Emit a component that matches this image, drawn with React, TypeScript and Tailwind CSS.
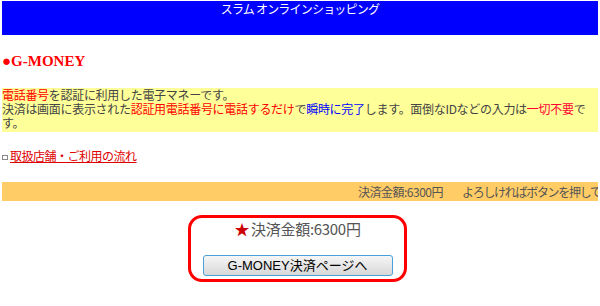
import React from "react";

export default function App() {
  const jp = { fontFamily: '"Noto Sans CJK JP", "Noto Sans", sans-serif' };
  return (
    <div className="w-[600px] h-[306px] bg-white overflow-hidden px-[2px] pt-[1px]" style={jp}>
      <div className="h-[34px] bg-[#0000ff] text-white text-[12px] leading-[16px] text-center tracking-[-0.8px]">
        スラム オンラインショッピング
      </div>
      <h1
        className="mt-[17px] h-[18px] text-[15px] leading-[18px] font-bold text-[#ff0000]"
        style={{ fontFamily: '"Liberation Serif", serif' }}
      >
        ●G-MONEY
      </h1>
      <div className="mt-[18px] bg-[#ffff99] text-[12px] leading-[14px] text-[#444] pb-[2px] tracking-[-0.3px] whitespace-nowrap overflow-hidden">
        <div>
          <span className="text-[#ff0000]">電話番号</span>を認証に利用した電子マネーです。
        </div>
        <div>
          決済は画面に表示された<span className="text-[#ff0000]">認証用電話番号に電話するだけ</span>で<span className="text-[#0000ff]">瞬時に完了</span>します。面倒なIDなどの入力は<span className="text-[#ff0033]">一切不要</span>で
        </div>
        <div>す。</div>
      </div>
      <div className="mt-[16px] flex items-center h-[16px] text-[12px] leading-[16px] tracking-[-0.5px]">
        <span className="inline-block w-[6px] h-[5px] border border-[#888] mr-[2px] mt-[3px]" />
        <a href="#" className="text-[#dd0000] underline">
          取扱店舗・ご利用の流れ
        </a>
      </div>
      <div className="mt-[18px] h-[19px] bg-[#ffcc66] text-[12px] leading-[19px] text-[#555] whitespace-nowrap overflow-hidden pl-[356px] tracking-[-0.5px]">
        決済金額:6300円<span className="inline-block w-[19px]" />
        <span className="tracking-[-1.3px]">よろしければボタンを押してください</span>
      </div>
      <div className="mt-[14px] ml-[186px] w-[219px] border-[3px] border-[#ff0000] rounded-[14px] pt-[1px] pb-[3px] flex flex-col items-center">
        <div className="h-[20px] text-[15px] leading-[20px] text-[#555] flex items-center tracking-[-0.3px]">
          <span className="text-[#cc0000] mr-[2px]">★</span>
          <span>決済金額:6300円</span>
        </div>
        <button
          className="mt-[16px] w-[190px] h-[21px] rounded-[3px] border border-[#4aa0d8] bg-gradient-to-b from-[#f6f6f6] to-[#d8d8d8] text-[13px] leading-[19px] text-black"
          style={{ fontFamily: '"Liberation Sans", "Noto Sans CJK JP", sans-serif' }}
        >
          G-MONEY決済ページへ
        </button>
      </div>
    </div>
  );
}
